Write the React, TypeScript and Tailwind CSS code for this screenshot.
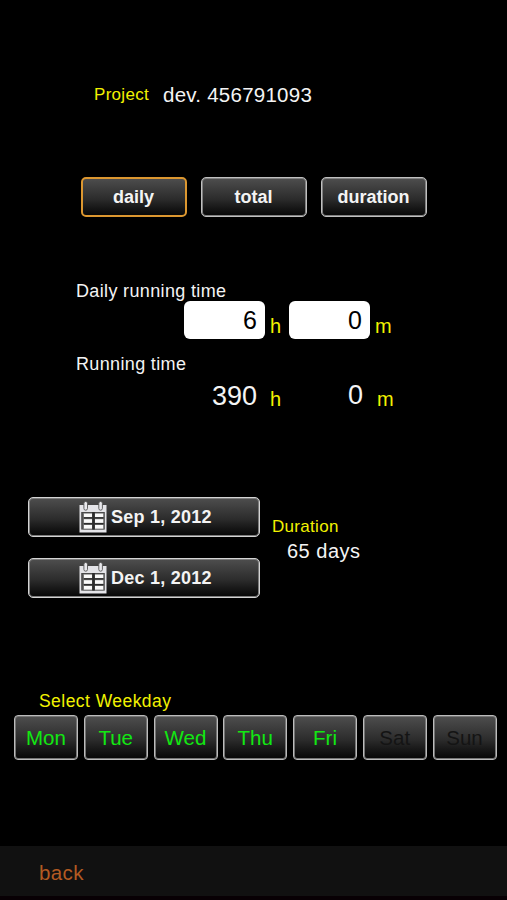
import clsx from 'clsx'

const modes = [
  { label: 'daily', selected: true },
  { label: 'total', selected: false },
  { label: 'duration', selected: false },
]

const dates = ['Sep 1, 2012', 'Dec 1, 2012']

const weekdays = [
  { label: 'Mon', active: true },
  { label: 'Tue', active: true },
  { label: 'Wed', active: true },
  { label: 'Thu', active: true },
  { label: 'Fri', active: true },
  { label: 'Sat', active: false },
  { label: 'Sun', active: false },
]

const gradient = 'bg-linear-to-b from-[#505050] via-[#2c2c2c] via-55% to-[#050505] bg-origin-border'

function CalendarIcon() {
  return (
    <svg width="28" height="32" viewBox="0 0 28 32" className="shrink-0">
      <path d="M0.5 4H27.5V31.5H0.5Z" fill="#e4e4e8" />
      <path d="M2.2 11H25.8V28.6H2.2Z" fill="#4a4a4a" />
      <path d="M3.8 12H24.8V28.6H3.8Z" fill="#777" />
      <g fill="#2c2c2c">
        <rect x="13.2" y="11" width="2.6" height="17.6" />
        <rect x="4.6" y="16.2" width="20" height="1.4" />
        <rect x="4.6" y="22" width="20" height="1.4" />
      </g>
      <g fill="#fafafa">
        <rect x="5" y="12.6" width="8" height="3.4" />
        <rect x="16" y="12.6" width="8.2" height="3.4" />
        <rect x="5" y="18.2" width="8" height="3.6" />
        <rect x="16" y="18.2" width="8.2" height="3.6" />
        <rect x="5" y="24" width="8" height="3.6" />
        <rect x="16" y="24" width="8.2" height="3.6" />
      </g>
      <g fill="#e8e8ec" stroke="#555" strokeWidth="0.9">
        <rect x="4.9" y="0.4" width="3.6" height="8.8" rx="1.8" />
        <rect x="19.8" y="0.4" width="3.6" height="8.8" rx="1.8" />
      </g>
    </svg>
  )
}

function TimeInput({ value }: { value: string }) {
  return (
    <div className="h-[38px] w-[81px] rounded-[6px] bg-white pr-[8px] text-right text-[25px] leading-[38px] text-black">
      {value}
    </div>
  )
}

export default function App() {
  return (
    <div className="flex h-[900px] w-[507px] flex-col overflow-hidden bg-black font-['Liberation_Sans',Arial,sans-serif] text-[#f4f4f4]">
      {/* Project */}
      <div className="mt-[83px] flex h-6 items-center pl-[94px] leading-6">
        <span className="w-[69px] text-[17px] tracking-[0.3px] text-[#f2f200]">Project</span>
        <span className="text-[20.5px] tracking-[0.25px]">dev. 456791093</span>
      </div>

      {/* Mode */}
      <div className="mt-[70px] flex gap-[14px] pl-[81px]">
        {modes.map((mode) => (
          <button
            key={mode.label}
            className={clsx(
              'h-10 w-[106px] rounded-[5px] pr-px text-[18px] font-bold leading-[36px]',
              gradient,
              mode.selected
                ? 'border-2 border-[#dc9730]'
                : 'border border-[#c0c0c0] shadow-[inset_0_0_0_1px_#808080]',
            )}
          >
            {mode.label}
          </button>
        ))}
      </div>

      {/* Daily running time */}
      <div className="mt-[64px] pl-[75px]">
        <div className="h-5 pl-px text-[18px] leading-5 tracking-[0.35px]">Daily running time</div>
        <div className="flex h-[38px] pl-[109px]">
          <TimeInput value="6" />
          <span className="w-6 pl-[5px] pt-[6px] text-[20px] leading-[38px] text-[#f2f200]">h</span>
          <TimeInput value="0" />
          <span className="pl-[5px] pt-[6px] text-[20px] leading-[38px] text-[#f2f200]">m</span>
        </div>
      </div>

      {/* Running time */}
      <div className="mt-[15px] pl-[75px]">
        <div className="h-5 pl-px text-[18px] leading-5 tracking-[0.35px]">Running time</div>
        <div className="flex h-[42px] leading-[42px]">
          <span className="mt-px w-[182px] text-right text-[27px]">390</span>
          <span className="w-[25px] pl-[13px] pt-[4px] text-[20px] text-[#f2f200]">h</span>
          <span className="w-[81px] text-right text-[27px]">0</span>
          <span className="pl-[14px] pt-[4px] text-[20px] text-[#f2f200]">m</span>
        </div>
      </div>

      {/* Dates */}
      <div className="mt-[81px] flex h-[101px] pl-[28px]">
        <div className="flex w-[232px] flex-col gap-[21px]">
          {dates.map((date) => (
            <button
              key={date}
              className={clsx(
                'flex h-10 items-center rounded-[5px] border border-[#d4d4d4] pl-[50px] text-[18px] font-bold tracking-[0.25px] shadow-[inset_0_0_0_1px_#7c7c7c]',
                gradient,
              )}
            >
              <CalendarIcon />
              <span className="ml-[4px]">{date}</span>
            </button>
          ))}
        </div>
        <div className="pl-[12px] pt-[18px]">
          <div className="h-6 text-[17px] leading-6 tracking-[0.3px] text-[#f2f200]">Duration</div>
          <div className="pl-[15px] text-[20px] leading-6 tracking-[0.5px]">65 days</div>
        </div>
      </div>

      {/* Weekdays */}
      <div className="mt-[93px] h-6 pl-[39px] text-[17.5px] leading-[21px] tracking-[0.45px] text-[#f2f200]">
        Select Weekday
      </div>
      <div className="flex gap-[5.75px] pl-[14px]">
        {weekdays.map((day) => (
          <button
            key={day.label}
            className={clsx(
              'h-[45px] w-16 shrink-0 rounded-[4px] border border-[#bcbcbc] text-[20.5px] leading-[41px] shadow-[inset_0_0_0_1px_#747474]',
              gradient,
              day.active ? 'text-[#12e812]' : 'text-[#141414]',
            )}
          >
            {day.label}
          </button>
        ))}
      </div>

      {/* Footer */}
      <div className="mt-auto h-[54px] border-b-4 border-[#080004] bg-[#111] pl-[39px] text-[20.5px] leading-[54px] tracking-[0.4px] text-[#b35a22]">
        back
      </div>
    </div>
  )
}
